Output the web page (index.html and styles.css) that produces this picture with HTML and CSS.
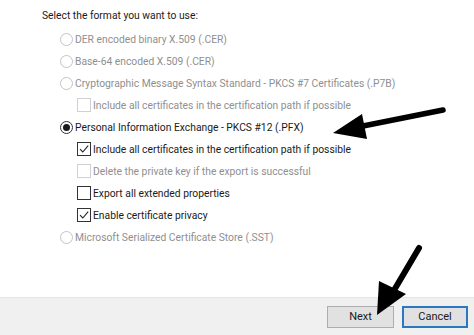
FILE: index.html
```html
<!DOCTYPE html>
<html>
<head>
<meta charset="utf-8">
<link rel="stylesheet" href="styles.css">
</head>
<body>
<div class="page">
  <div class="content">
    <div class="heading">Select the format you want to use:</div>
    <div class="options">
      <div class="row disabled"><span class="radio"></span><span>DER encoded binary X.509 (.CER)</span></div>
      <div class="row disabled"><span class="radio"></span><span>Base-64 encoded X.509 (.CER)</span></div>
      <div class="row disabled"><span class="radio"></span><span>Cryptographic Message Syntax Standard - PKCS #7 Certificates (.P7B)</span></div>
      <div class="row sub disabled"><span class="check"></span><span>Include all certificates in the certification path if possible</span></div>
      <div class="row"><span class="radio on"></span><span>Personal Information Exchange - PKCS #12 (.PFX)</span></div>
      <div class="row sub"><span class="check on"><svg viewBox="0 0 12 12" width="12" height="12"><path d="M2 6.2 L4.8 9 L10.2 2.6" fill="none" stroke="#222" stroke-width="1.1"/></svg></span><span>Include all certificates in the certification path if possible</span></div>
      <div class="row sub disabled"><span class="check"></span><span>Delete the private key if the export is successful</span></div>
      <div class="row sub"><span class="check"></span><span>Export all extended properties</span></div>
      <div class="row sub"><span class="check on"><svg viewBox="0 0 12 12" width="12" height="12"><path d="M2 6.2 L4.8 9 L10.2 2.6" fill="none" stroke="#222" stroke-width="1.1"/></svg></span><span>Enable certificate privacy</span></div>
      <div class="row disabled"><span class="radio"></span><span>Microsoft Serialized Certificate Store (.SST)</span></div>
    </div>
  </div>
  <div class="footer">
    <button class="btn">Next</button>
    <button class="btn default">Cancel</button>
  </div>
  <svg class="arrows" viewBox="0 0 474 335" width="474" height="335">
    <line x1="443" y1="110" x2="358" y2="127" stroke="#000" stroke-width="5.5" stroke-linecap="round"/>
    <polygon points="333,133 362,114 367,139" fill="#000"/>
    <line x1="419" y1="248" x2="393" y2="292" stroke="#000" stroke-width="6" stroke-linecap="round"/>
    <polygon points="377,315 379,281 406,294" fill="#000"/>
  </svg>
</div>
</body>
</html>
```

FILE: styles.css
```css
html, body {
  margin: 0;
  padding: 0;
  background: #fff;
}
.page {
  position: relative;
  width: 474px;
  height: 335px;
  overflow: hidden;
  font-family: Roboto, "Liberation Sans", sans-serif;
  font-size: 10.3px;
  color: #1a1a1a;
}
.content {
  height: 297px;
  padding: 6px 0 0 42px;
  box-sizing: border-box;
}
.heading {
  height: 20px;
  line-height: 20px;
}
.options {
  display: flex;
  flex-direction: column;
  padding-left: 18px;
  padding-top: 2px;
}
.row {
  display: flex;
  align-items: center;
  height: 22px;
  gap: 2px;
}
.row.sub {
  padding-left: 17px;
  gap: 2px;
}
.row.disabled {
  color: #8f8f8f;
}
.radio {
  width: 11px;
  height: 11px;
  border: 1px solid #333;
  border-radius: 50%;
  box-sizing: content-box;
  display: flex;
  align-items: center;
  justify-content: center;
  flex: none;
}
.disabled .radio {
  border-color: #c4c4c4;
}
.radio.on::after {
  content: "";
  width: 7px;
  height: 7px;
  border-radius: 50%;
  background: #1a1a1a;
}
.check {
  width: 12px;
  height: 12px;
  border: 1px solid #333;
  background: #fff;
  flex: none;
  display: flex;
}
.disabled .check {
  border-color: #d0d0d0;
}
.footer {
  height: 38px;
  background: #f0f0f0;
  border-top: 1px solid #e6e6e6;
  box-sizing: border-box;
  display: flex;
  justify-content: flex-end;
  align-items: center;
  gap: 8px;
  padding-right: 6px;
}
.btn {
  font-family: Roboto, "Liberation Sans", sans-serif;
  font-size: 11px;
  color: #1a1a1a;
  height: 22px;
  background: #e1e1e1;
  border: 1px solid #adadad;
  padding: 0;
  width: 67px;
  margin: 0;
}
.btn.default {
  border: 2px solid #2a78c2;
  width: 66px;
}
.arrows {
  position: absolute;
  left: 0;
  top: 0;
  pointer-events: none;
}
```
